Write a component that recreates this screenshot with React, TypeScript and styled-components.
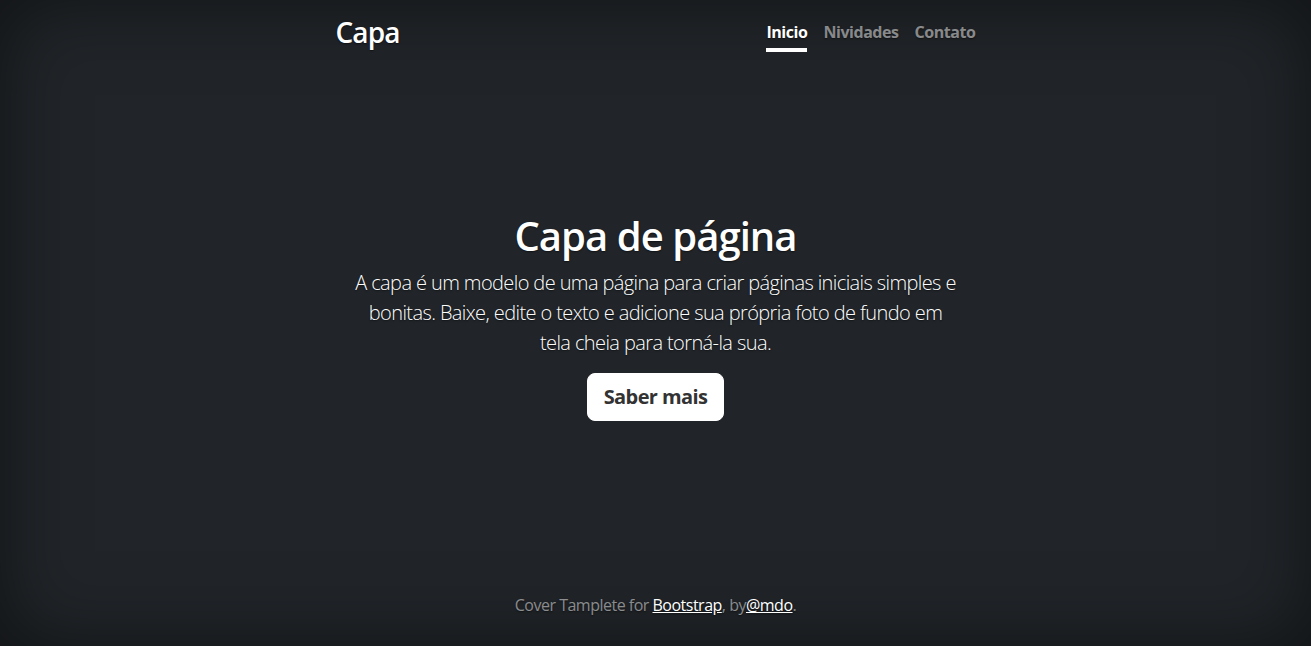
import React from "react";
import styled, { createGlobalStyle } from "styled-components";

const GlobalStyle = createGlobalStyle`
  html, body, #root { height: 100%; }
  body {
    margin: 0;
    background-color: #212529;
    color: #fff;
    font-family: "Open Sans", "Noto Sans", sans-serif;
    font-size: 16px;
    line-height: 1.5;
    letter-spacing: -0.5px;
    text-shadow: 0 0.05rem 0.1rem rgba(0, 0, 0, 0.5);
    box-shadow: inset 0 0 5rem rgba(0, 0, 0, 0.5);
  }
  *, *::before, *::after { box-sizing: border-box; }
`;

const Cover = styled.div`
  display: flex;
  flex-direction: column;
  width: 100%;
  max-width: 672px;
  height: 100%;
  margin: 0 auto;
  padding: 16px;
  text-align: center;
`;

const Header = styled.header`
  display: flex;
  justify-content: space-between;
  align-items: flex-start;
  margin-bottom: auto;
`;

const Brand = styled.h3`
  margin: 0;
  font-size: 28px;
  font-weight: 600;
  line-height: 1.2;
  letter-spacing: -0.9px;
`;

const Nav = styled.nav`
  display: flex;
`;

const NavLink = styled.a<{ $active?: boolean }>`
  margin-left: 16px;
  padding: 4px 0;
  font-weight: 700;
  font-size: 16px;
  letter-spacing: -0.45px;
  color: ${(p) => (p.$active ? "#fff" : "rgba(255, 255, 255, 0.5)")};
  text-decoration: none;
  border-bottom: 4px solid ${(p) => (p.$active ? "#fff" : "transparent")};
`;

const Main = styled.main`
  padding: 4px 16px 0;
`;

const Title = styled.h1`
  margin: 0 0 8px;
  font-size: 40px;
  font-weight: 600;
  line-height: 1.2;
  letter-spacing: -0.95px;
`;

const Lead = styled.p<{ $last?: boolean }>`
  margin: 0 0 ${(p) => (p.$last ? "14px" : "15px")};
  font-size: 20px;
  font-weight: 300;
  line-height: 1.5;
  letter-spacing: -0.6px;
`;

const Button = styled.a`
  display: inline-block;
  padding: 8px 16px;
  font-size: 20px;
  font-weight: 700;
  line-height: 1.5;
  letter-spacing: -0.6px;
  color: #333;
  background: #fff;
  border: 1px solid #fff;
  border-radius: 8px;
  text-decoration: none;
  text-shadow: none;
`;

const Footer = styled.footer`
  margin-top: auto;
  color: rgba(255, 255, 255, 0.5);
`;

const FooterText = styled.p`
  margin: 0 0 13px;
  padding-top: 3px;
`;

const FooterLink = styled.a`
  color: #fff;
  text-decoration: underline;
`;

export default function App() {
  return (
    <>
      <GlobalStyle />
      <Cover>
        <Header>
          <Brand>Capa</Brand>
          <Nav>
            <NavLink $active href="#">Inicio</NavLink>
            <NavLink href="#">Nividades</NavLink>
            <NavLink href="#">Contato</NavLink>
          </Nav>
        </Header>
        <Main>
          <Title>Capa de página</Title>
          <Lead>
            A capa é um modelo de uma página para criar páginas iniciais simples e bonitas. Baixe, edite o texto e
            adicione sua própria foto de fundo em tela cheia para torná-la sua.
          </Lead>
          <Lead $last>
            <Button href="#">Saber mais</Button>
          </Lead>
        </Main>
        <Footer>
          <FooterText>
            Cover Tamplete for <FooterLink href="#">Bootstrap</FooterLink>, by<FooterLink href="#">@mdo</FooterLink>.
          </FooterText>
        </Footer>
      </Cover>
    </>
  );
}
